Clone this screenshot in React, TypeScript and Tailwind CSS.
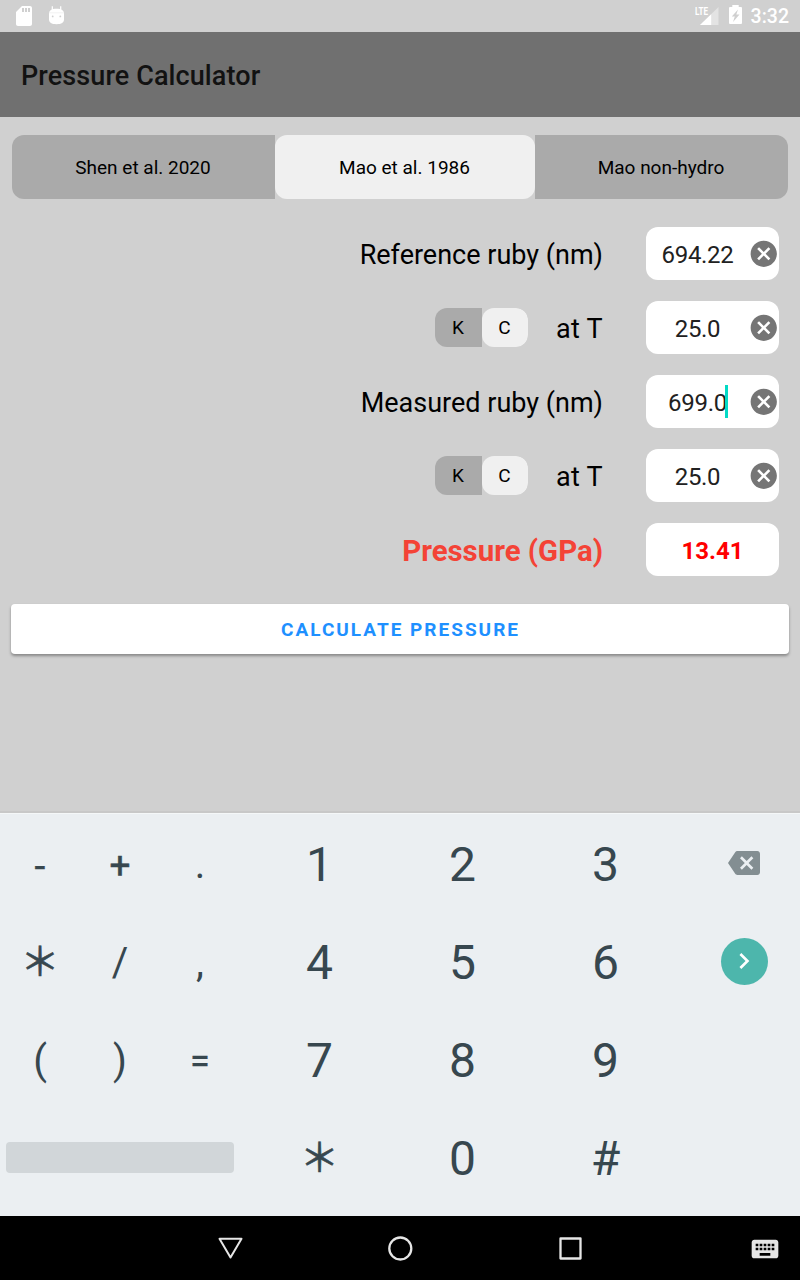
import { useState } from "react";
import type { ReactNode } from "react";
import { MdBackspace, MdCancel, MdChevronRight, MdKeyboard, MdSdCard } from "react-icons/md";

function StatusBar() {
  return (
    <div className="flex h-8 items-center justify-between bg-[#d0d0d0] pr-[11px] pl-3 text-white">
      <div className="flex items-center gap-3">
        <MdSdCard size={24} />
        <svg width="17" height="20" viewBox="0 0 17 20" className="block">
          <path d="M4.300 .3v5M12.700 .3v5" stroke="#fff" strokeWidth="1.200" />
          <path d="M1 7.600C1 4.600 3.500 2.800 8.500 2.800S16 4.600 16 7.600v5.900c0 3-2.500 4.700-7.500 4.700S1 16.500 1 13.500z" fill="#fff" />
          <path d="M1.200 6.800h14.600" stroke="#e8e8e8" strokeWidth=".6" />
          <circle cx="4.700" cy="10.400" r=".9" fill="#d0d0d0" />
          <circle cx="12.300" cy="10.400" r=".9" fill="#d0d0d0" />
        </svg>
      </div>
      <div className="flex items-center">
        <div className="relative mr-[10px] h-5 w-6">
          <span className="absolute top-0 left-0 origin-left scale-x-70 text-[11.500px] leading-[10px] font-bold">LTE</span>
          <svg width="24" height="20" viewBox="0 0 24 20" className="block">
            <path d="M23.500 1v18H5z" fill="#fff" opacity=".4" />
            <path d="M16.200 8.300V19H5z" fill="#fff" />
          </svg>
        </div>
        <svg width="13" height="20" viewBox="0 0 13 20" className="mr-[9px] mb-[2px] block">
          <path fillRule="evenodd" d="M3.300 0h6.400v2H12q1 0 1 1v15q0 1-1 1H1q-1 0-1-1V3q0-1 1-1h2.300zM9 4.500 2.800 11.500h3L4 17l6.500-7.500H7.300z" fill="#fff" />
        </svg>
        <span className="pt-[2px] text-[19.500px] leading-8 font-medium">3:32</span>
      </div>
    </div>
  );
}

type SegmentProps = { label: string; active: boolean; className: string; onClick: () => void };

function Segment({ label, active, className, onClick }: SegmentProps) {
  return (
    <button
      onClick={onClick}
      className={`${className} flex items-center justify-center pt-[2px] pr-[1px] text-[19px] text-black ${active ? "rounded-xl bg-[#f0f0f0]" : "bg-[#aaaaaa]"}`}
    >
      {label}
    </button>
  );
}

function UnitToggle() {
  const [unit, setUnit] = useState("C");
  return (
    <div className="mr-7 flex h-[39px] w-[93px] overflow-hidden rounded-xl">
      <Segment label="K" active={unit === "K"} className="w-[47px]" onClick={() => setUnit("K")} />
      <Segment label="C" active={unit === "C"} className="w-[46px]" onClick={() => setUnit("C")} />
    </div>
  );
}

function FormRow({ label, children, field }: { label: ReactNode; children?: ReactNode; field: ReactNode }) {
  return (
    <div className="flex h-[53px] items-center justify-end">
      {children}
      <div className="mr-[43px] pt-[2px] text-[27px] leading-8 text-black">{label}</div>
      <div className="flex h-[53px] w-[133px] items-center rounded-xl bg-white">{field}</div>
    </div>
  );
}

function NumberField({ value, focused = false }: { value: string; focused?: boolean }) {
  return (
    <>
      <div className="flex h-full w-[103px] items-center justify-center pt-[2px] text-[24px] tracking-[-0.300px] text-[#212121]">
        <span className="relative">
          {value}
          {focused && <span className="absolute top-0 right-[-1px] h-[33px] w-[3px] bg-[#03dac5]" />}
        </span>
      </div>
      <MdCancel size={31.5} className="-ml-[1.500px] shrink-0 text-[#757575]" />
    </>
  );
}

const models = [
  { name: "Shen et al. 2020", width: "w-[263px]" },
  { name: "Mao et al. 1986", width: "w-[260px]" },
  { name: "Mao non-hydro", width: "w-[253px]" },
];

const symbolRows = [
  ["-", "+", "."],
  ["＊", "/", ","],
  ["(", ")", "="],
];

const digitRows = [
  ["1", "2", "3"],
  ["4", "5", "6"],
  ["7", "8", "9"],
  ["＊", "0", "#"],
];

function symbolStyle(key: string) {
  if (key === "＊") return "text-[39.500px] pb-[1px] [-webkit-text-stroke:0.600px_#37474f]";
  if (key === "+") return "text-[37px] [-webkit-text-stroke:0.500px_#37474f]";
  if (key === "=") return "text-[36px] pb-[1px] [-webkit-text-stroke:0.300px_#37474f]";
  if (key === "-") return "text-[39px] pt-[3px] [-webkit-text-stroke:0.400px_#37474f]";
  return "text-[40px]";
}

function Keyboard() {
  return (
    <div className="flex h-[403px] border-t border-[#f4f7f8] bg-[#ebeff2] pt-[2px] text-[#37474f]">
      <div className="w-60">
        {symbolRows.map((row) => (
          <div key={row[0]} className="grid h-[98px] grid-cols-3">
            {row.map((key) => (
              <button key={key} className={`flex items-center justify-center leading-none ${symbolStyle(key)}`}>
                {key}
              </button>
            ))}
          </div>
        ))}
        <div className="flex h-[98px] items-center px-[6px] pb-[4px]">
          <div className="h-[31px] w-full rounded bg-[#d1d6d9]" />
        </div>
      </div>
      <div className="ml-2 w-[429px]">
        {digitRows.map((row) => (
          <div key={row[1]} className="grid h-[98px] grid-cols-3">
            {row.map((key) => (
              <button
                key={key}
                className={`flex items-center justify-center leading-none ${key === "＊" ? symbolStyle(key) : "text-[48px]"}`}
              >
                {key}
              </button>
            ))}
          </div>
        ))}
      </div>
      <div className="ml-[43px] w-12">
        <div className="flex h-[98px] items-center justify-center pb-[4px]">
          <MdBackspace size={32} className="text-[#838e92]" />
        </div>
        <div className="flex h-[98px] items-center justify-center pb-[3px] pl-[1px]">
          <div className="flex size-[47px] items-center justify-center rounded-full bg-[#4db6ac] pr-[2px] pb-[1px] text-white">
            <MdChevronRight size={32} />
          </div>
        </div>
      </div>
    </div>
  );
}

function NavigationBar() {
  return (
    <div className="flex h-16 items-center bg-black pr-[19px] pl-[215px]">
      <svg width="30" height="30" viewBox="0 0 30 30" className="block" fill="none" stroke="#e6e6e6" strokeWidth="2" strokeLinejoin="round">
        <path d="M4.500 5.800h22L15.500 24.500z" />
      </svg>
      <svg width="30" height="30" viewBox="0 0 30 30" className="ml-[140px] block" fill="none" stroke="#e6e6e6" strokeWidth="2.300">
        <circle cx="15.300" cy="15.500" r="11" />
      </svg>
      <svg width="30" height="30" viewBox="0 0 30 30" className="ml-[140px] block" fill="none" stroke="#e6e6e6" strokeWidth="2.300" strokeLinejoin="round">
        <path d="M5.500 5.500h20v20h-20z" />
      </svg>
      <MdKeyboard size={32} className="mt-[1px] ml-auto text-[#e6e6e6]" />
    </div>
  );
}

export default function App() {
  const [model, setModel] = useState("Mao et al. 1986");
  return (
    <div className="flex h-[1280px] w-[800px] flex-col overflow-hidden bg-[#d0d0d0] font-[Roboto,'Noto_Sans_CJK_JP',sans-serif]">
      <StatusBar />
      <header className="flex h-[85px] items-center bg-[#707070] pt-[3px] pl-[21px]">
        <h1 className="text-[27px] font-medium tracking-[0.100px] text-[#121212]">Pressure Calculator</h1>
      </header>
      <main className="flex grow flex-col px-[11px] pt-[18px]">
        <div className="ml-[1px] flex h-16 w-[776px] overflow-hidden rounded-xl">
          {models.map(({ name, width }) => (
            <Segment key={name} label={name} active={model === name} className={width} onClick={() => setModel(name)} />
          ))}
        </div>
        <div className="mt-7 mr-[10px] flex flex-col gap-[21px]">
          <FormRow label="Reference ruby (nm)" field={<NumberField value="694.22" />} />
          <FormRow label={<span className="tracking-[0.300px]">at T</span>} field={<NumberField value="25.0" />}>
            <UnitToggle />
          </FormRow>
          <FormRow label="Measured ruby (nm)" field={<NumberField value="699.0" focused />} />
          <FormRow label={<span className="tracking-[0.300px]">at T</span>} field={<NumberField value="25.0" />}>
            <UnitToggle />
          </FormRow>
          <FormRow
            label={<span className="relative top-[1px] text-[29.400px] font-bold text-[#f44336]">Pressure (GPa)</span>}
            field={<span className="w-full pt-[2px] text-center text-[24px] font-bold text-[#ff0000]">13.41</span>}
          />
        </div>
        <button className="mt-7 flex h-[50px] items-center justify-center rounded bg-white pt-[2px] pl-[1px] text-[19px] font-bold tracking-[2px] text-[#1e90ff] shadow-[0_2px_3px_rgba(0,0,0,0.35)]">
          CALCULATE PRESSURE
        </button>
      </main>
      <div className="h-[2px] bg-[#c8c8c8]" />
      <Keyboard />
      <NavigationBar />
    </div>
  );
}
